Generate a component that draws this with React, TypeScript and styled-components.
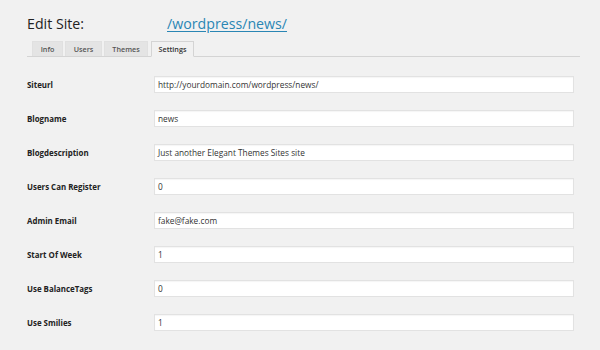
import React from "react";
import styled, { createGlobalStyle } from "styled-components";

const Global = createGlobalStyle`
  html, body { margin: 0; padding: 0; background: #f1f1f1; }
  body { font-family: "Open Sans", "Liberation Sans", sans-serif; color: #222; }
`;

const Page = styled.div`
  width: 600px;
  height: 350px;
  overflow: hidden;
  background: #f1f1f1;
  padding: 14px 0 0 27px;
  box-sizing: border-box;
`;

const Title = styled.h2`
  margin: 0;
  display: flex;
  align-items: baseline;
  font-size: 14.2px;
  font-weight: 400;
  color: #222;
  line-height: 20px;
  height: 20px;
`;

const TitleText = styled.span`
  width: 140px;
`;

const TitleLink = styled.a`
  color: #2a86b4;
  text-decoration: underline;
  text-underline-offset: 2px;
  text-decoration-thickness: 1px;
`;

const TabBar = styled.div`
  display: flex;
  align-items: flex-end;
  gap: 2px;
  margin-top: 8px;
  width: 553px;
  height: 15px;
  padding-left: 5px;
  box-sizing: border-box;
  border-bottom: 1px solid #d4d4d4;
`;

const Tab = styled.div<{ $active?: boolean; $w: number; $ml?: number }>`
  width: ${(p) => p.$w}px;
  margin-left: ${(p) => p.$ml ?? 0}px;
  height: ${(p) => (p.$active ? 16 : 15)}px;
  margin-bottom: ${(p) => (p.$active ? -1 : 0)}px;
  box-sizing: border-box;
  border: 1px solid ${(p) => (p.$active ? "#d4d4d4" : "#e0e0e0")};
  border-bottom: ${(p) => (p.$active ? "1px solid #f1f1f1" : "none")};
  background: ${(p) => (p.$active ? "#f1f1f1" : "#e4e4e4")};
  display: flex;
  align-items: center;
  justify-content: center;
  font-size: 7.2px;
  font-weight: 600;
  color: ${(p) => (p.$active ? "#333" : "#555")};
  padding-bottom: ${(p) => (p.$active ? 1 : 0)}px;
`;

const Form = styled.div`
  display: flex;
  flex-direction: column;
  gap: 17px;
  margin-top: 19px;
`;

const Row = styled.div`
  display: flex;
  align-items: center;
  height: 17px;
`;

const Label = styled.label`
  width: 127px;
  font-size: 7.9px;
  font-weight: 700;
  color: #222;
`;

const Input = styled.div`
  width: 420px;
  height: 17px;
  box-sizing: border-box;
  background: #fff;
  border: 1px solid #e2e2e2;
  box-shadow: inset 0 1px 1px rgba(0, 0, 0, 0.04);
  display: flex;
  align-items: center;
  padding-left: 3px;
  font-size: 8.3px;
  color: #333;
`;

const fields: [string, string][] = [
  ["Siteurl", "http://yourdomain.com/wordpress/news/"],
  ["Blogname", "news"],
  ["Blogdescription", "Just another Elegant Themes Sites site"],
  ["Users Can Register", "0"],
  ["Admin Email", "fake@fake.com"],
  ["Start Of Week", "1"],
  ["Use BalanceTags", "0"],
  ["Use Smilies", "1"],
];

export default function App() {
  return (
    <Page>
      <Global />
      <Title>
        <TitleText>Edit Site:</TitleText>
        <TitleLink href="#">/wordpress/news/</TitleLink>
      </Title>
      <TabBar>
        <Tab $w={31}>Info</Tab>
        <Tab $w={37}>Users</Tab>
        <Tab $w={44}>Themes</Tab>
        <Tab $w={43} $active $ml={1}>Settings</Tab>
      </TabBar>
      <Form>
        {fields.map(([l, v]) => (
          <Row key={l}>
            <Label>{l}</Label>
            <Input>{v}</Input>
          </Row>
        ))}
      </Form>
    </Page>
  );
}
